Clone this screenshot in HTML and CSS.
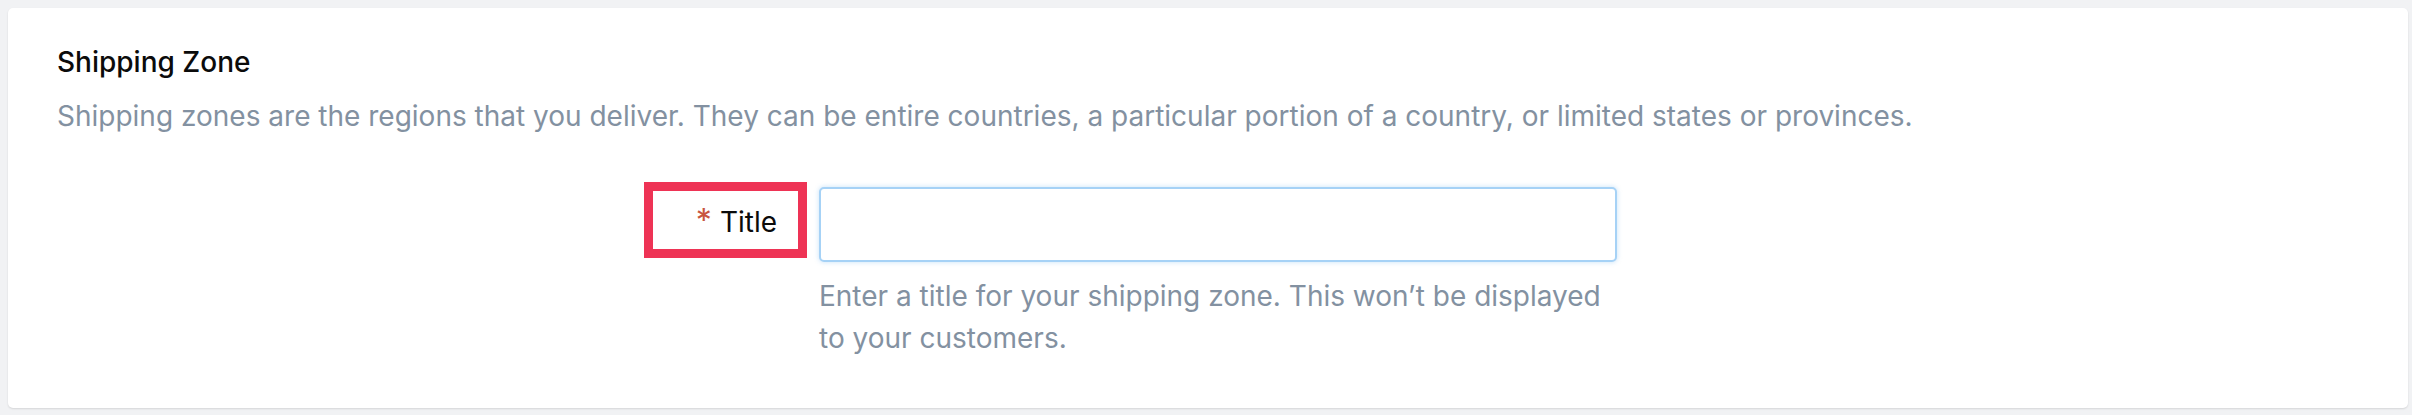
FILE: index.html
```html
<!DOCTYPE html>
<html lang="en">
<head>
<meta charset="utf-8">
<title>Shipping Zone</title>
<link rel="stylesheet" href="styles.css">
</head>
<body>
<section class="card">
  <h2 class="card-title">Shipping Zone</h2>
  <p class="card-desc">Shipping zones are the regions that you deliver. They can be entire countries, a particular portion of a country, or limited states or provinces.</p>
  <div class="form-row">
    <div class="label-col">
      <label class="field-label" for="title"><span class="req">*</span>Title</label>
    </div>
    <div class="field-col">
      <input class="text-input" id="title" type="text">
      <p class="help">Enter a title for your shipping zone. This won’t be displayed to your customers.</p>
    </div>
  </div>
</section>
</body>
</html>
```

FILE: styles.css
```css
* { box-sizing: border-box; }
html, body { margin: 0; padding: 0; }
body {
  background: #f1f2f4;
  font-family: Inter, "Noto Sans", sans-serif;
  padding: 8px 4px 7px 8px;
  height: 415px;
}
.card {
  background: #ffffff;
  border-radius: 5px;
  box-shadow: 0 1px 2px rgba(0,0,0,0.12);
  height: 400px;
  padding: 39px 49px 0 49px;
}
.card-title {
  margin: 0;
  font-size: 28px;
  font-weight: 500;
  line-height: 30px;
  color: #0b0b0b;
}
.card-desc {
  margin: 21px 0 0 0;
  font-size: 28px;
  line-height: 36px;
  color: #8391a1;
}
.form-row {
  display: grid;
  grid-template-columns: 750px 798px;
  column-gap: 12px;
  margin-top: 48px;
}
.label-col {
  display: flex;
  justify-content: flex-end;
  align-items: flex-start;
}
.field-label {
  display: block;
  width: 163px;
  height: 76px;
  border: 9px solid #ee3355;
  padding: 4px 21px 0 0;
  text-align: right;
  font-size: 28px;
  line-height: 52px;
  color: #0b0b0b;
}
.req {
  color: #c8553f;
  font-size: 32px;
  margin-right: 8px;
}
.field-col {
  padding-top: 5px;
}
.text-input {
  display: block;
  width: 798px;
  height: 75px;
  border: 2px solid #a6d2f6;
  border-radius: 5px;
  box-shadow: 0 0 4px 1px rgba(140,195,240,0.35);
  background: #fff;
  outline: none;
  font-family: inherit;
  font-size: 28px;
}
.help {
  margin: 14px 0 0 0;
  font-size: 28px;
  line-height: 41.5px;
  color: #8391a1;
  width: 798px;
}
```
